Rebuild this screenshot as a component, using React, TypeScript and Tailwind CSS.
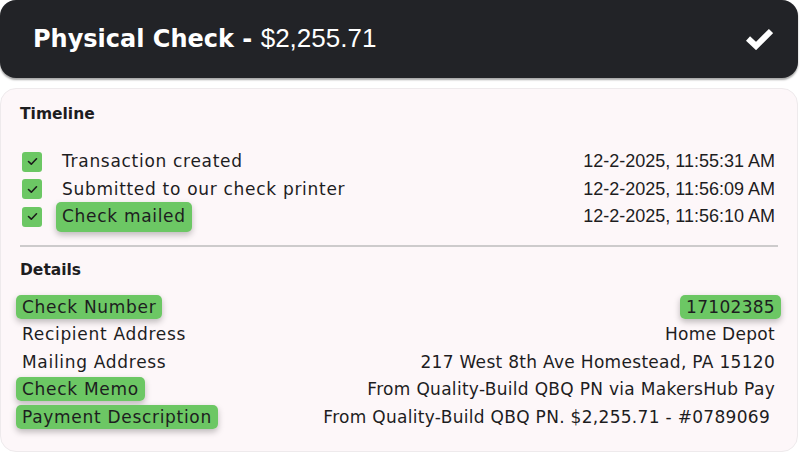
import React from "react";

const body = { fontFamily: '"DejaVu Sans", "Noto Sans", sans-serif' };
const num = { fontFamily: '"Liberation Sans", Arial, sans-serif' };

function Box() {
  return (
    <span className="flex h-[20px] w-[20px] items-center justify-center rounded-[3px] bg-[#6cc764]">
      <svg width="11" height="9" viewBox="0 0 11 9" fill="none">
        <path d="M1.5 4.5 L4.3 7.2 L9.5 1.8" stroke="#1b1b1b" strokeWidth="1.6" strokeLinecap="round" strokeLinejoin="round" />
      </svg>
    </span>
  );
}

function Hl({ on, children }: { on?: boolean; children: React.ReactNode }) {
  return on ? (
    <span className="-mx-[6px] rounded-[5px] bg-[#6cc764] px-[6px] py-[2px] shadow-[0_3px_6px_rgba(0,0,0,0.25)]">{children}</span>
  ) : (
    <span>{children}</span>
  );
}

export default function App() {
  const timeline = [
    ["Transaction created", "12-2-2025, 11:55:31 AM", false],
    ["Submitted to our check printer", "12-2-2025, 11:56:09 AM", false],
    ["Check mailed", "12-2-2025, 11:56:10 AM", true],
  ] as const;
  const details = [
    ["Check Number", "17102385", true, true, false],
    ["Recipient Address", "Home Depot", false, false, false],
    ["Mailing Address", "217 West 8th Ave Homestead, PA 15120", false, false, false],
    ["Check Memo", "From Quality-Build QBQ PN via MakersHub Pay", true, false, false],
    ["Payment Description", "From Quality-Build QBQ PN. $2,255.71 - #0789069", true, false, true],
  ] as const;
  return (
    <div className="h-[454px] w-[800px] bg-white pr-[2px] text-[#1d1d1f]" style={body}>
      <div className="flex h-[78px] items-center justify-between rounded-[16px] bg-[#222327] pb-[3px] pl-[33px] pr-[25px] shadow-[0_2px_2px_rgba(0,0,0,0.35)]">
        <div className="text-[24px] leading-none text-white">
          <span className="font-semibold">Physical Check - </span>
          <span className="text-[26px]" style={num}>$2,255.71</span>
        </div>
        <svg width="27" height="24" viewBox="0 0 27 24">
          <path d="M2 12.5 L10 20 L25 5" stroke="#ffffff" strokeWidth="6" fill="none" strokeLinejoin="miter" />
        </svg>
      </div>
      <div className="mt-[10px] h-[364px] rounded-[16px] border border-[#eeeaec] bg-[#fdf7f9] px-[19px] pt-[14px]">
        <div className="text-[15.5px] font-semibold leading-[22px]">Timeline</div>
        <div className="mt-[23px] flex flex-col">
          {timeline.map(([t, d, h]) => (
            <div key={t} className="flex h-[27.5px] items-center justify-between text-[17px] tracking-[0.7px]">
              <div className="flex items-center">
                <span className="ml-[2px] mr-[20px]"><Box /></span>
                <Hl on={h}>{t}</Hl>
              </div>
              <span className="mr-[3px] text-[18px] tracking-normal" style={num}>{d}</span>
            </div>
          ))}
        </div>
        <div className="mt-[14px] h-[2px] bg-[#cdcbcc]" />
        <div className="mt-[12px] text-[15.5px] font-semibold leading-[22px]">Details</div>
        <div className="mt-[13px] flex flex-col">
          {details.map(([l, v, h, vh, trail]) => (
            <div key={l} className="flex h-[27.5px] items-center justify-between text-[17px]">
              <span className="ml-[2px] tracking-[0.7px]"><Hl on={h}>{l}</Hl></span>
              <span className={trail ? "mr-[8px] tracking-[0.3px]" : "mr-[3px] tracking-[0.3px]"}><Hl on={vh}>{v}</Hl></span>
            </div>
          ))}
        </div>
      </div>
    </div>
  );
}
